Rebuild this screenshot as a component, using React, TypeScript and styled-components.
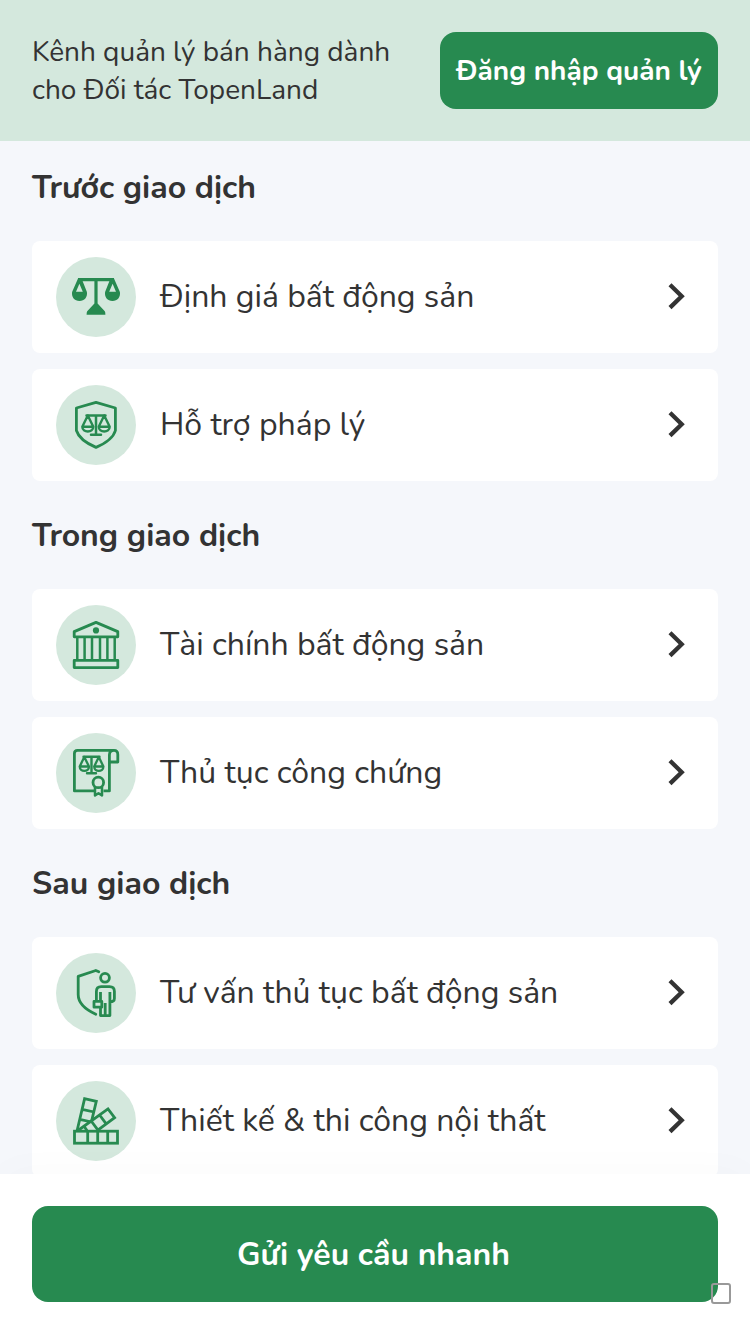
import React from 'react';
import styled, { createGlobalStyle } from 'styled-components';

const green = '#278a50';
const mint = '#d4e8dd';
const ink = '#333333';

const GlobalStyle = createGlobalStyle`
  *, *::before, *::after { box-sizing: border-box; }
  html, body { margin: 0; padding: 0; background: #f5f7fb; }
  body { font-family: Nunito, "Open Sans", "Noto Sans", sans-serif; color: ${ink}; overflow: hidden; }
  button { font: inherit; border: 0; margin: 0; }
`;

const Page = styled.div`
  width: 750px;
  height: 1334px;
  display: flex;
  flex-direction: column;
  overflow: hidden;
  background: #f5f7fb;
`;

const Header = styled.header`
  flex: none;
  height: 141px;
  padding: 32px;
  display: flex;
  align-items: flex-start;
  justify-content: space-between;
  background: ${mint};
`;

const Label = styled.span`
  display: block;
  white-space: nowrap;
`;

const Intro = styled.div`
  font-size: 28px;
  line-height: 38px;
  padding-top: 1px;
`;

const LoginButton = styled.button`
  width: 278px;
  height: 77px;
  padding: 0;
  display: flex;
  align-items: center;
  justify-content: center;
  border-radius: 16px;
  background: ${green};
  color: #fff;
  font-size: 28px;
  font-weight: 700;
`;

const Content = styled.main`
  flex: 1;
  min-height: 0;
  overflow: hidden;
  padding: 25px 32px 0;
`;

const Section = styled.section`
  margin-bottom: 33px;
`;

const SectionTitle = styled.h2`
  margin: 0 0 31px;
  font-size: 32px;
  line-height: 44px;
  font-weight: 700;
`;

const List = styled.div`
  display: flex;
  flex-direction: column;
  gap: 16px;
`;

const Row = styled.div`
  height: 112px;
  padding: 0 24px;
  display: flex;
  align-items: center;
  gap: 24px;
  border-radius: 8px;
  background: #fff;
  font-size: 32px;
  line-height: 44px;
`;

const IconCircle = styled.span`
  flex: none;
  width: 80px;
  height: 80px;
  border-radius: 50%;
  background: ${mint};
  svg { display: block; }
`;

const Chevron = styled.svg`
  flex: none;
  margin-left: auto;
`;

const Footer = styled.footer`
  position: relative;
  flex: none;
  height: 160px;
  padding: 32px;
  background: #fff;
  box-shadow: 0 -4px 40px rgba(0, 0, 0, 0.02);
`;

const SubmitButton = styled.button`
  width: 100%;
  height: 96px;
  padding: 0 3px 0 0;
  display: flex;
  align-items: center;
  justify-content: center;
  border-radius: 16px;
  background: ${green};
  color: #fff;
  font-size: 32px;
  font-weight: 700;
`;

const CornerBox = styled.span`
  position: absolute;
  right: 19px;
  top: 109px;
  width: 20.5px;
  height: 20.5px;
  border: 2px solid #999;
  border-radius: 3px;
`;

const IconFrame = ({ children }: { children: React.ReactNode }) => (
  <IconCircle>
    <svg width="80" height="80" viewBox="0 0 80 80" fill="none" stroke={green} strokeWidth="2.8" strokeLinejoin="round">
      {children}
    </svg>
  </IconCircle>
);

const ScalesIcon = () => (
  <IconFrame>
    <g fill={green} stroke="none">
      <path d="M22 21H58V24.2H41.6V46.5L48.8 54.2Q49.4 55 49.4 57.7H30.6Q30.6 55 31.2 54.2L38.4 46.5V24.2H22Z" />
      <path fillRule="evenodd" d="M22 21.5H25.6L30.9 35C31.7 40 28.5 44 23.5 44C18.5 44 15.3 40 16.1 35ZM23.4 26.8L20 34.8H26.8Z" />
      <path fillRule="evenodd" d="M54.4 21.5H58L63.9 35C64.7 40 61.5 44 56.5 44C51.5 44 48.3 40 49.1 35ZM56.6 26.8L53.2 34.8H60Z" />
    </g>
  </IconFrame>
);

const ShieldScalesIcon = () => (
  <IconFrame>
    <path d="M40 17.4L59.4 23V45.5C57.5 52.5 49 58.5 40 62.4C31 58.5 22.5 52.5 20.4 45.5V23Z" />
    <path strokeWidth="2.5" strokeLinecap="round" d="M30.5 30.5H49.5M40 30.5V49.5M35 49.8H45" />
    <path strokeWidth="2.4" d="M31.8 30.5L26.3 41.8H37.3ZM26.3 41.8C26.3 48 37.3 48 37.3 41.8M48.2 30.5L42.7 41.8H53.7ZM42.7 41.8C42.7 48 53.7 48 53.7 41.8" />
  </IconFrame>
);

const BankIcon = () => (
  <IconFrame>
    <path d="M40 17.4L61.8 26.6V31.8H18.2V26.6Z" />
    <circle cx="40" cy="25.4" r="3.1" fill={green} stroke="none" />
    <path strokeWidth="2.5" d="M21.3 32V55M28.6 32V55M36 32V55M44 32V55M51.4 32V55M58.7 32V55" />
    <rect x="18.2" y="55.4" width="43.6" height="7.2" />
  </IconFrame>
);

const ContractIcon = () => (
  <IconFrame>
    <path d="M38 57.9H18.4V20.5Q18.4 17.4 21.5 17.4H58Q61.8 17.4 61.8 21.5V29H53.4M58 17.4Q53.4 17.4 53.4 22V57.9H47.5" />
    <path strokeWidth="2.4" strokeLinecap="round" d="M27.5 23.8H43.5M35.5 23.8V40M31 40.2H40" />
    <path strokeWidth="2.3" d="M28.3 24L23.7 33.5H33ZM23.7 33.5C23.7 39.4 33 39.4 33 33.5M42.8 24L38.2 33.5H47.4ZM38.2 33.5C38.2 39.4 47.4 39.4 47.4 33.5" />
    <circle cx="42.3" cy="49.4" r="5.3" />
    <path strokeWidth="2.5" d="M39 54V62.4L42.5 60.2L46 62.4V54" />
  </IconFrame>
);

const AdvisorIcon = () => (
  <IconFrame>
    <path strokeLinecap="round" d="M42.8 18.8L39.8 17.5L22.2 23.3V41.5C22.2 50 30.5 57 39.8 61.2" />
    <circle cx="49" cy="24.8" r="4.4" />
    <path d="M40.4 48V38.5Q40.4 33.7 45.2 33.7H53.5Q58.4 33.7 58.4 38.5V45.5Q58.4 48.8 54 48.8M44.5 39V48M44.5 54.5V62.6H53.9V39M49.2 50V62.6" />
    <rect x="38" y="48.4" width="7.8" height="5.8" />
  </IconFrame>
);

const SwatchesIcon = () => (
  <IconFrame>
    <g strokeLinejoin="miter">
      <rect x="18.5" y="50.2" width="43" height="12" />
      <path d="M31.7 50V62M41.7 50V62M51.7 50V62" />
      <path d="M21 50L28.6 17.6L40.3 20.4L35.5 40.5M26.2 28.3L38 31M23.8 38.3L35.5 41" />
      <path d="M22 49.5L52 27.9L58.6 36.6L41.5 49.3M43.6 34L50.2 42.8M35.2 40L41.8 48.8M28 45.2L31 49.5" />
    </g>
  </IconFrame>
);

interface Item {
  text: string;
  Icon: () => React.ReactElement;
}

const sections: { title: string; items: Item[] }[] = [
  {
    title: 'Trước giao dịch',
    items: [
      { text: 'Định giá bất động sản', Icon: ScalesIcon },
      { text: 'Hỗ trợ pháp lý', Icon: ShieldScalesIcon },
    ],
  },
  {
    title: 'Trong giao dịch',
    items: [
      { text: 'Tài chính bất động sản', Icon: BankIcon },
      { text: 'Thủ tục công chứng', Icon: ContractIcon },
    ],
  },
  {
    title: 'Sau giao dịch',
    items: [
      { text: 'Tư vấn thủ tục bất động sản', Icon: AdvisorIcon },
      { text: 'Thiết kế & thi công nội thất', Icon: SwatchesIcon },
    ],
  },
];

export default function App() {
  return (
    <Page>
      <GlobalStyle />
      <Header>
        <Intro>
          <Label>Kênh quản lý bán hàng dành</Label>
          <Label>cho Đối tác TopenLand</Label>
        </Intro>
        <LoginButton>
          <Label>Đăng nhập quản lý</Label>
        </LoginButton>
      </Header>
      <Content>
        {sections.map((section) => (
          <Section key={section.title}>
            <SectionTitle>{section.title}</SectionTitle>
            <List>
              {section.items.map(({ text, Icon }) => (
                <Row key={text}>
                  <Icon />
                  <Label>{text}</Label>
                  <Chevron width="34" height="34" viewBox="0 0 34 34" fill="none" stroke={ink} strokeWidth="4.3">
                    <path d="M10 4.8L21.7 16.2L10 27.6" />
                  </Chevron>
                </Row>
              ))}
            </List>
          </Section>
        ))}
      </Content>
      <Footer>
        <SubmitButton>
          <Label>Gửi yêu cầu nhanh</Label>
        </SubmitButton>
        <CornerBox />
      </Footer>
    </Page>
  );
}
